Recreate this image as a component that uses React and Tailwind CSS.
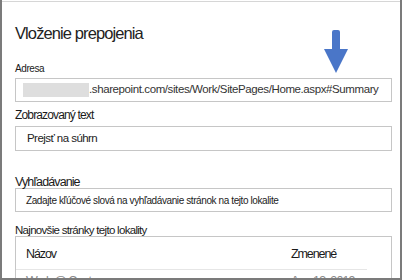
import React from "react"

const font = { fontFamily: '"Liberation Sans", Arial, sans-serif' }

const Arrow = () => (
  <svg
    className="absolute left-[321px] top-[29px]"
    width="26"
    height="45"
    viewBox="0 0 26 45"
  >
    <path
      d="M9 3 Q9 1 11 1 L15 1 Q17 1 17 3 L17 20 L25 20 L13 44 L1 20 L9 20 Z"
      fill="#4a76c8"
    />
  </svg>
)

export default function App() {
  return (
    <div
      className="relative w-[402px] h-[280px] bg-white text-[#1a1a1a] border-l-2 border-r-2 border-b-2 border-[#7b7b7b] overflow-hidden"
      style={font}
    >
      <div className="h-px bg-[#d6d6d6] mt-px" />
      <div className="pl-[13px] pr-[8px]">
        <h1 className="mt-[19px] h-[24px] text-[16.5px] leading-[24px] tracking-[-0.9px] text-[#222]">
          Vloženie prepojenia
        </h1>

        <div className="mt-[17px] h-[14px] text-[10px] leading-[14px] tracking-[-0.4px]">Adresa</div>
        <div className="mt-[2px] h-[24px] border border-[#c6c6c6] flex items-center pl-[7px] text-[11.5px] tracking-[-0.4px] text-[#333] overflow-hidden">
          <span className="shrink-0 inline-block w-[66px] h-[14px] bg-[#dedede]" />
          <span className="whitespace-nowrap">.sharepoint.com/sites/Work/SitePages/Home.aspx#Summary</span>
        </div>

        <div className="mt-[4px] h-[18px] text-[12px] leading-[18px] tracking-[-0.85px]">Zobrazovaný text</div>
        <div className="mt-[2px] h-[25px] border border-[#c6c6c6] flex items-center pl-[11px] text-[11.5px] tracking-[-0.55px] text-[#222]">
          Prejsť na súhrn
        </div>

        <div className="mt-[23px] h-[16px] text-[12.5px] leading-[16px] tracking-[-0.9px]">Vyhľadávanie</div>
        <div className="mt-[-2px] h-[24px] border border-[#c6c6c6] flex items-center pl-[10px] text-[10px] tracking-[-0.4px] text-[#222]">
          Zadajte kľúčové slová na vyhľadávanie stránok na tejto lokalite
        </div>

        <div className="mt-[11px] h-[14px] text-[11.5px] leading-[14px] tracking-[-0.7px]">
          Najnovšie stránky tejto lokality
        </div>
        <div className="mt-[-1px] h-[60px] border border-[#c6c6c6]">
          <div className="mr-[24px] flex h-[33px] items-end pb-[5px] pl-[10px] text-[12.5px] tracking-[-1.1px] border-b border-[#e6e6e6]">
            <span className="flex-1">Názov</span>
            <span className="w-[76px]">Zmenené</span>
          </div>
          <div className="mr-[24px] flex pt-[2px] pl-[10px] text-[12.5px] tracking-[-0.9px] text-[#8a8a8a]">
            <span className="flex-1">Work @ Contoso</span>
            <span className="w-[76px]">Aug 13, 2019</span>
          </div>
        </div>
      </div>
      <Arrow />
    </div>
  )
}
